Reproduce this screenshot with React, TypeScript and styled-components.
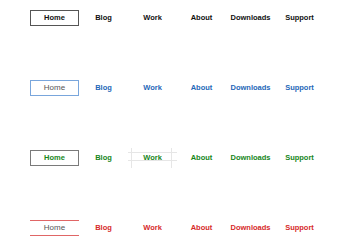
import React from "react";
import styled, { createGlobalStyle, css } from "styled-components";

type Variant = "plain" | "blue" | "green" | "red";

const Global = createGlobalStyle`
  html, body { margin: 0; padding: 0; background: #fff; }
  body { font-family: "Liberation Sans", Arial, sans-serif; }
`;

const Page = styled.div`
  display: flex;
  flex-direction: column;
  gap: 54px;
  padding: 10px 0 0 30px;
`;

const NavList = styled.ul`
  display: flex;
  list-style: none;
  margin: 0;
  padding: 0;
`;

const linkColor: Record<Variant, string> = {
  plain: "#111",
  blue: "#1f68b8",
  green: "#17861b",
  red: "#d62a2a",
};

const activeStyles: Record<Variant, ReturnType<typeof css>> = {
  plain: css`
    color: #111;
    border: 1px solid #555;
  `,
  blue: css`
    color: #555;
    font-weight: normal;
    font-size: 8px;
    border: 1px solid #79a6dc;
  `,
  green: css`
    color: #17861b;
    border: 1px solid #7a7a7a;
    &::before {
      content: "";
      position: absolute;
      top: -1px;
      bottom: -1px;
      left: -2px;
      right: -2px;
      border-top: 1px solid #bbb;
      border-bottom: 1px solid #bbb;
      z-index: -1;
    }
    &::after {
      content: "";
      position: absolute;
      top: -2px;
      bottom: -2px;
      left: -1px;
      right: -1px;
      border-left: 1px solid #bbb;
      border-right: 1px solid #bbb;
      z-index: -1;
    }
  `,
  red: css`
    color: #555;
    font-weight: normal;
    font-size: 8px;
    border-top: 1px solid #e06666;
    border-bottom: 1px solid #e06666;
  `,
};

const Item = styled.li<{ $variant: Variant; $active?: boolean; $marked?: boolean }>`
  position: relative;
  box-sizing: border-box;
  width: 49px;
  height: 16px;
  display: flex;
  align-items: center;
  justify-content: center;
  font-size: 7.5px;
  font-weight: bold;
  line-height: 1;
  color: ${(p) => linkColor[p.$variant]};
  ${(p) => p.$active && activeStyles[p.$variant]}
  ${(p) =>
    p.$marked &&
    css`
      &::before {
        content: "";
        position: absolute;
        left: 0;
        right: 0;
        top: 2px;
        bottom: 5px;
        border-top: 1px solid #e6e6e6;
        border-bottom: 1px solid #e6e6e6;
      }
      &::after {
        content: "";
        position: absolute;
        left: 3px;
        right: 5px;
        top: -2px;
        bottom: -2px;
        border-left: 1px solid #e6e6e6;
        border-right: 1px solid #e6e6e6;
      }
    `}
`;

const Label = styled.span`
  position: relative;
  z-index: 1;
`;

const links = ["Home", "Blog", "Work", "About", "Downloads", "Support"];

const Nav: React.FC<{ variant: Variant }> = ({ variant }) => (
  <nav>
    <NavList>
      {links.map((l, i) => (
        <Item
          key={l}
          $variant={variant}
          $active={i === 0}
          $marked={variant === "green" && l === "Work"}
        >
          <Label>{l}</Label>
        </Item>
      ))}
    </NavList>
  </nav>
);

export default function App() {
  return (
    <>
      <Global />
      <Page>
        <Nav variant="plain" />
        <Nav variant="blue" />
        <Nav variant="green" />
        <Nav variant="red" />
      </Page>
    </>
  );
}
